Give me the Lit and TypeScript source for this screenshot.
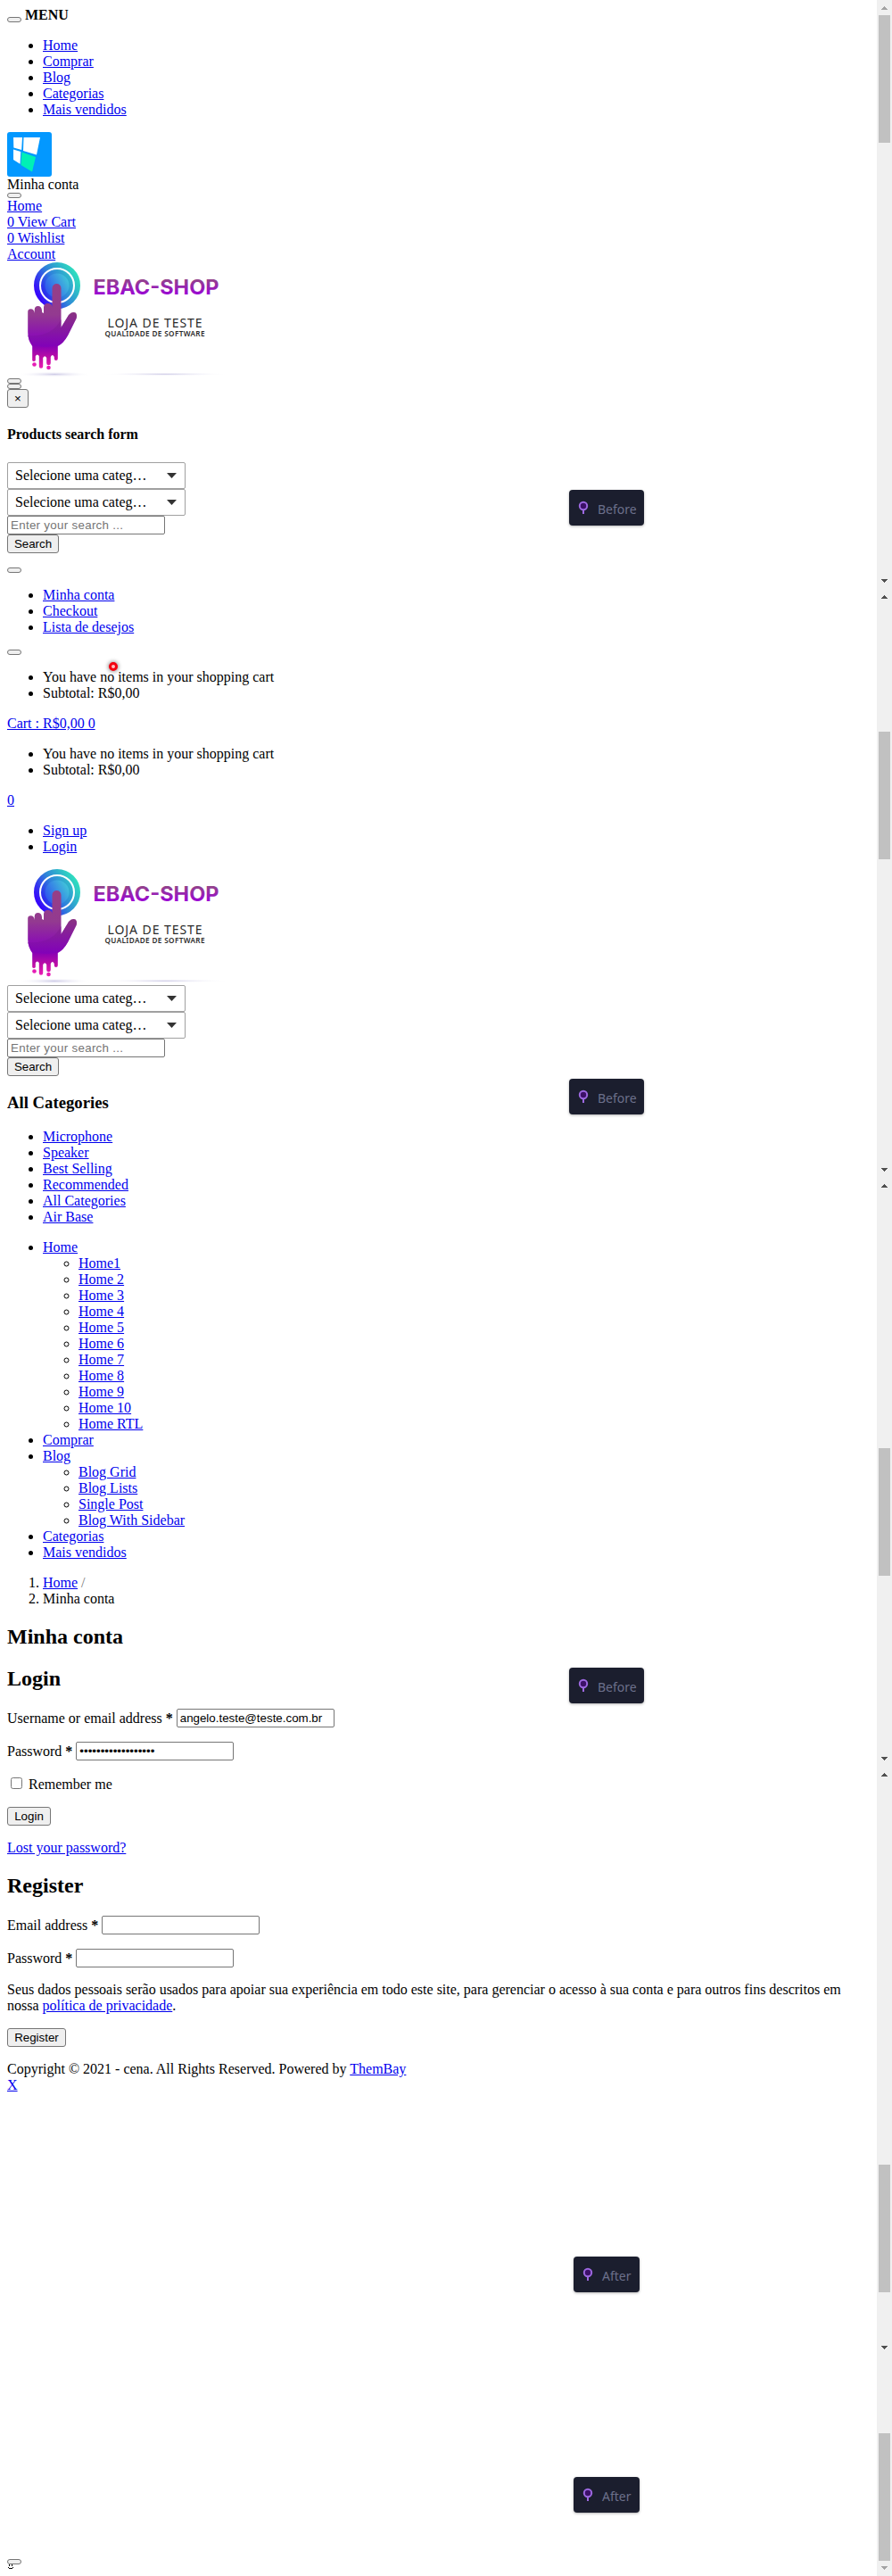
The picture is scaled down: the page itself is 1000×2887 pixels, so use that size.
import { LitElement, html, css, svg } from "lit";
import { customElement, property } from "lit/decorators.js";

const link = (t: string) => html`<a href="#">${t}</a>`;

@customElement("shop-logo")
class ShopLogo extends LitElement {
  static styles = css`
    :host { display: block; height: 130px; }
    svg { display: block; }
  `;
  render() {
    return html`<svg width="260" height="130" viewBox="8 0 260 130">
      <defs>
        <linearGradient id="ring" x1="0" y1="0.8" x2="1" y2="0.2">
          <stop offset="0.05" stop-color="#3606fb" /><stop offset="0.5" stop-color="#2f86d8" /><stop offset="1" stop-color="#2fe3bd" />
        </linearGradient>
        <linearGradient id="disc" x1="0" y1="0.8" x2="1" y2="0.2">
          <stop offset="0" stop-color="#2b17f2" /><stop offset="0.5" stop-color="#2f80dc" /><stop offset="1" stop-color="#30c4c6" />
        </linearGradient>
        <linearGradient id="core" x1="0" y1="0.8" x2="1" y2="0.2">
          <stop offset="0" stop-color="#2e4df0" /><stop offset="1" stop-color="#42cbd8" />
        </linearGradient>
        <linearGradient id="hand" gradientUnits="userSpaceOnUse" x1="0" y1="24" x2="0" y2="120">
          <stop offset="0" stop-color="#963f86" /><stop offset="0.36" stop-color="#933a90" />
          <stop offset="0.62" stop-color="#8a0db5" /><stop offset="0.72" stop-color="#8500b5" />
          <stop offset="0.86" stop-color="#bb0da6" /><stop offset="1" stop-color="#f01fb4" />
        </linearGradient>
        <linearGradient id="shade" gradientUnits="userSpaceOnUse" x1="0" y1="55" x2="0" y2="94">
          <stop offset="0" stop-color="#85307c" /><stop offset="1" stop-color="#8003b9" />
        </linearGradient>
        <linearGradient id="word" gradientUnits="userSpaceOnUse" x1="0" y1="19" x2="0" y2="36">
          <stop offset="0" stop-color="#93458a" /><stop offset="1" stop-color="#9a05d4" />
        </linearGradient>
        <radialGradient id="soft"><stop offset="0" stop-color="#cdcae6" /><stop offset="1" stop-color="#fff" stop-opacity="0" /></radialGradient>
      </defs>
      <circle cx="64" cy="26" r="23" fill="none" stroke="url(#ring)" stroke-width="6" />
      <circle cx="64" cy="26" r="18" fill="url(#disc)" />
      <circle cx="64" cy="26" r="13.500" fill="url(#core)" />
      <path fill="url(#hand)" d="M58.500 56V29a5 5 0 0 1 10 0V73L77 59Q80.500 55 84.500 56.500Q87 59 85.500 63L76 82Q71 91 64.800 94V108a2 2 0 0 1-4 0V106q-2-4-4 0V113a2.300 2.300 0 0 1-4.600 0V107q-2-3.500-4 0V116.500a2.200 2.200 0 0 1-4.400 0V105q-2-3-4 0V110a2.200 2.200 0 0 1-3.600 0V94Q31 87 31.200 78V56Q31 52.300 34.500 52.300Q38.300 52.300 38.700 57V53Q39 49 42.500 49Q46.500 49 47 54V56L49 57V50Q49.500 46 53.500 46Q58 46 58.500 50Z" />
      <path fill="url(#shade)" d="M68.500 73L77 59Q80.500 55 84.500 56.500Q87 59 85.500 63L76 82Q71 91 64.800 93Q48 98 36 91Q32 87 31.200 82Q58 84 68.500 64Z" opacity=".7" />
      <circle cx="38.500" cy="114.500" r="2.300" fill="#e51db4" /><circle cx="54.500" cy="118" r="2.300" fill="#e51db4" />
      <ellipse cx="61" cy="125.500" rx="42" ry="3.200" fill="url(#soft)" /><ellipse cx="185" cy="125.300" rx="74" ry="2" fill="url(#soft)" />
      <text x="104.500" y="35.500" font-family="Inter, sans-serif" font-weight="700" font-size="23" textLength="141" lengthAdjust="spacingAndGlyphs" fill="url(#word)">EBAC-SHOP</text>
      <text x="120.500" y="73" font-family="Noto Sans, sans-serif" font-size="14" textLength="106" fill="#2b2b2b">LOJA DE TESTE</text>
      <text x="117.500" y="82.700" font-family="Noto Sans, sans-serif" font-weight="600" font-size="8.200" textLength="112" fill="#2b2b2b">QUALIDADE DE SOFTWARE</text>
    </svg>`;
  }
}

@customElement("search-form")
class SearchForm extends LitElement {
  static styles = css`
    :host { display: block; height: 102px; }
    .select { box-sizing: border-box; width: 200px; height: 30px; border: 1px solid #a0a0a0; border-radius: 2px; display: flex; align-items: center; justify-content: space-between; padding: 0 9px 0 8px; }
    .arrow { width: 11px; height: 6px; background: #333; clip-path: polygon(0 0, 100% 0, 50% 100%); }
    .field { display: block; box-sizing: border-box; width: 177px; height: 21px; margin: 0; padding: 1px 3px; border: 1px solid #767676; border-radius: 2px; background: #fff; font: 13.333px "Liberation Sans", Arial, sans-serif; letter-spacing: .3px; }
    .field::placeholder { color: #757575; }
    .btn { display: block; box-sizing: border-box; width: 58px; height: 21px; padding: 0; border: 1px solid #767676; border-radius: 3px; background: #efefef; color: #000; font: 13.333px/15px "Liberation Sans", Arial, sans-serif; }
  `;
  render() {
    return html`
      <div class="select"><span>Selecione uma categ…</span><span class="arrow"></span></div>
      <div class="select"><span>Selecione uma categ…</span><span class="arrow"></span></div>
      <input class="field" placeholder="Enter your search ..." />
      <button class="btn">Search</button>`;
  }
}

@customElement("tour-badge")
class TourBadge extends LitElement {
  @property() label = "";
  static styles = css`
    :host { box-sizing: border-box; height: 40px; display: flex; align-items: center; padding-left: 10px; border-radius: 4px; background: #1b1e2e; box-shadow: 0 1px 3px rgba(0, 0, 0, .3); color: #6c708b; font: 14px/20px "Noto Sans", sans-serif; }
    .label { padding: 3px 0 0 10px; }
  `;
  render() {
    return html`<svg width="12" height="16" viewBox="0 0 12 16">
        <path d="M6 9v6" stroke="#9d68e0" stroke-width="2" />
        <circle cx="6" cy="6" r="4.200" fill="#3c1068" stroke="#9d68e0" stroke-width="2" />
      </svg><span class="label">${this.label}</span>`;
  }
}

@customElement("app-root")
class AppRoot extends LitElement {
  static styles = css`
    :host { display: block; position: relative; box-sizing: border-box; width: 1000px; height: 2887px; overflow: hidden; background: #fff; color: #000; font: 16px/18px "Liberation Serif", "Times New Roman", serif; }
    .page { padding: 8px 8px 0; width: 983px; box-sizing: border-box; }
    a { color: #0000ee; text-decoration: underline; }
    ul, ol { margin: 16px 0; padding-left: 40px; }
    ul ul { margin: 0; }
    .line { height: 18px; white-space: nowrap; }
    .menu { display: flex; align-items: flex-end; gap: 4px; }
    .menu .mini { margin-bottom: 1px; }
    .mini { display: block; box-sizing: border-box; width: 16px; height: 6px; padding: 0; border: 1px solid #767676; border-radius: 3px; background: #efefef; }
    .gap { margin: 16px 0; }
    .brand { display: block; }
    .btn { display: block; box-sizing: border-box; height: 21px; padding: 0 7px; border: 1px solid #767676; border-radius: 3px; background: #efefef; color: #000; font: 13.333px "Liberation Sans", Arial, sans-serif; }
    .close { width: 24px; padding: 0; }
    h4 { margin: 21px 0 22px; font-size: 16px; line-height: 18px; }
    h3 { margin: 19px 0; font-size: 18.72px; line-height: 21px; }
    h2 { margin: 20px 0; font-size: 24px; line-height: 27px; }
    .row { display: flex; gap: 4px; height: 21px; margin-bottom: 16px; line-height: 21px; }
    .field { box-sizing: border-box; width: 177px; height: 21px; margin: 0; padding: 1px 3px; border: 1px solid #767676; border-radius: 2px; background: #fff; color: #000; font: 13.333px "Liberation Sans", Arial, sans-serif; }
    .check { display: flex; height: 20px; margin-bottom: 16px; line-height: 21px; }
    .check input { margin: 3px 7px 0 4px; width: 13px; height: 13px; }
    .login { width: 49px; }
    .register { width: 66px; }
    .after { margin: 16px 0; }
    .slash { color: #777; }
    .foot { margin-top: 522px; }
    .smile { display: block; margin-left: 1px; }
    .rail { position: absolute; top: 0; right: 0; width: 17px; height: 100%; background: #f0f0f0; }
    .rail svg { display: block; }
    .pin { position: absolute; left: 638px; width: 84px; }
    .pin.alt { left: 643px; width: 74px; }
    .p1 { top: 549px; } .p2 { top: 1209px; } .p3 { top: 1869px; } .p4 { top: 2529px; } .p5 { top: 2776px; }
    .dot { position: absolute; box-sizing: border-box; left: 122px; top: 742px; width: 10px; height: 10px; border: 3px solid #f40010; border-radius: 50%; background: #ffc0c0; box-shadow: 0 0 4px 1px rgba(0, 0, 0, .4); }
  `;

  list(items: string[]) {
    return html`<ul>${items.map((i) => html`<li>${link(i)}</li>`)}</ul>`;
  }

  cart() {
    return html`<ul><li>You have no items in your shopping cart</li><li>Subtotal: R$0,00</li></ul>`;
  }

  up(y: number, c = "#505050") {
    return svg`<path fill=${c} d="M8 ${y}h1v1h1v1h1v1h1v1h-7v-1h1v-1h1v-1h1z" />`;
  }

  down(y: number, c = "#505050") {
    return svg`<path fill=${c} d="M5 ${y}h7v1h-1v1h-1v1h-1v1h-1v-1h-1v-1h-1v-1h-1z" />`;
  }

  render() {
    return html`
      <div class="page">
        <div class="line menu"><button class="mini"></button><b>MENU</b></div>
        ${this.list(["Home", "Comprar", "Blog", "Categorias", "Mais vendidos"])}
        <svg class="brand" width="50" height="50" viewBox="0 0 50 50">
          <rect width="50" height="50" rx="3" fill="#0398ff" />
          <path fill="#fff" d="M7 6h10l-.8 14L7.300 17.500zM18.500 6H37l-4 19.500-15-4.500zM7 19.500l8.300 2.500-.8 13.800L7 31z" />
          <path fill="#00f0b5" d="M16.500 22.500L32 28l-4 16.500L15.500 37z" />
        </svg>
        <div class="line">Minha conta</div>
        <button class="mini"></button>
        ${["Home", "0 View Cart", "0 Wishlist", "Account"].map((t) => html`<div class="line">${link(t)}</div>`)}
        <shop-logo></shop-logo>
        <button class="mini"></button>
        <button class="mini"></button>
        <button class="btn close">×</button>
        <h4>Products search form</h4>
        <search-form></search-form>
        <button class="mini gap"></button>
        ${this.list(["Minha conta", "Checkout", "Lista de desejos"])}
        <button class="mini"></button>
        ${this.cart()}
        <div class="line">${link("Cart : R$0,00 0")}</div>
        ${this.cart()}
        <div class="line">${link("0")}</div>
        ${this.list(["Sign up", "Login"])}
        <shop-logo></shop-logo>
        <search-form></search-form>
        <h3>All Categories</h3>
        ${this.list(["Microphone", "Speaker", "Best Selling", "Recommended", "All Categories", "Air Base"])}
        <ul>
          <li>${link("Home")}${this.list(["Home1", "Home 2", "Home 3", "Home 4", "Home 5", "Home 6", "Home 7", "Home 8", "Home 9", "Home 10", "Home RTL"])}</li>
          <li>${link("Comprar")}</li>
          <li>${link("Blog")}${this.list(["Blog Grid", "Blog Lists", "Single Post", "Blog With Sidebar"])}</li>
          <li>${link("Categorias")}</li>
          <li>${link("Mais vendidos")}</li>
        </ul>
        <ol><li>${link("Home")} <span class="slash">/</span></li><li>Minha conta</li></ol>
        <h2>Minha conta</h2>
        <h2>Login</h2>
        <div class="row"><span>Username or email address <b>*</b></span><input class="field" .value=${"angelo.teste@teste.com.br"} /></div>
        <div class="row"><span>Password <b>*</b></span><input class="field" type="password" .value=${"x".repeat(18)} /></div>
        <label class="check"><input type="checkbox" />Remember me</label>
        <button class="btn login">Login</button>
        <div class="line after">${link("Lost your password?")}</div>
        <h2>Register</h2>
        <div class="row"><span>Email address <b>*</b></span><input class="field" /></div>
        <div class="row"><span>Password <b>*</b></span><input class="field" /></div>
        <div>Seus dados pessoais serão usados para apoiar sua experiência em todo este site, para gerenciar o acesso à sua conta e para outros fins descritos em nossa ${link("política de privacidade")}.</div>
        <button class="btn register gap">Register</button>
        <div class="line">Copyright © 2021 - cena. All Rights Reserved. Powered by ${link("ThemBay")}</div>
        <div class="line">${link("X")}</div>
        <button class="mini foot"></button>
        <svg class="smile" width="6" height="6" viewBox="0 0 6 6"><path d="M1 0h1v2h-1zM4 0h1v2h-1zM0 3h1v1h4v-1h1v1h-1v1h-4v-1h-1z" /></svg>
      </div>
      <span class="dot"></span>
      <tour-badge class="pin p1" label="Before"></tour-badge>
      <tour-badge class="pin p2" label="Before"></tour-badge>
      <tour-badge class="pin p3" label="Before"></tour-badge>
      <tour-badge class="pin alt p4" label="After"></tour-badge>
      <tour-badge class="pin alt p5" label="After"></tour-badge>
      <div class="rail">
        <svg width="17" height="2887" viewBox="0 0 17 2887">
          ${[17, 820, 1623, 2426, 2727].map((y) => svg`<rect x="2" y=${y} width="13" height="143" fill="#c1c1c1" />`)}
          ${this.up(7, "#a3a3a3")}${[667, 1327, 1987].map((y) => this.up(y))}
          ${[649, 1309, 1969, 2629].map((y) => this.down(y))}${this.down(2876, "#a3a3a3")}
        </svg>
      </div>`;
  }
}
